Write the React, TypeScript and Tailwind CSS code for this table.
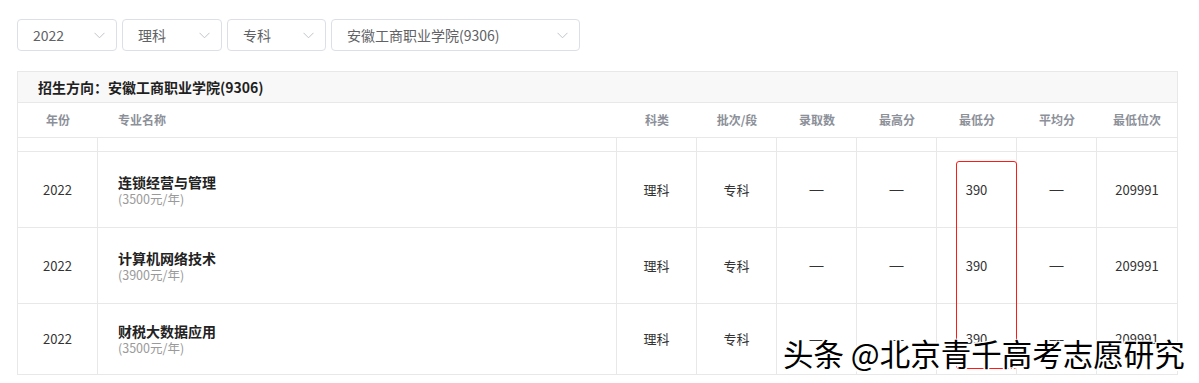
import React from "react";

const cols = "grid grid-cols-[80px_519px_80px_80px_80px_80px_80px_80px_80px]";

function Select({ w, label }: { w: string; label: string }) {
  return (
    <div className={`${w} h-[32px] border border-[#dcdfe6] rounded-[4px] flex items-center justify-between pl-[15px] pr-[11px] bg-white`}>
      <span className="text-[14px] text-[#606266]">{label}</span>
      <svg width="11" height="7" viewBox="0 0 11 7" fill="none">
        <path d="M0.5 0.8 L5.5 5.8 L10.5 0.8" stroke="#c0c4cc" strokeWidth="1" />
      </svg>
    </div>
  );
}

const rows = [
  { name: "连锁经营与管理", fee: "(3500元/年)", h: "h-[76px]" },
  { name: "计算机网络技术", fee: "(3900元/年)", h: "h-[76px]" },
  { name: "财税大数据应用", fee: "(3500元/年)", h: "h-[70px]" },
];

function Dash() {
  return <span className="font-['Liberation_Sans',sans-serif] text-[14px] text-[#333]">—</span>;
}

export default function App() {
  const cell = "border-r border-[#e8e8e8] flex items-center justify-center text-[13px] text-[#333]";
  return (
    <div className="relative w-[1199px] h-[383px] overflow-hidden bg-white font-['Noto_Sans_CJK_SC',sans-serif]">
      <div className="pt-[19px] pl-[17px]">
        <div className="flex gap-[5px]">
          <Select w="w-[100px]" label="2022" />
          <Select w="w-[100px]" label="理科" />
          <Select w="w-[99px]" label="专科" />
          <Select w="w-[249px]" label="安徽工商职业学院(9306)" />
        </div>
        <div className="mt-[20px] w-[1161px] border border-[#e8e8e8]">
          <div className="h-[31px] bg-[#f8f8f8] border-b border-[#e8e8e8] flex items-center pl-[20px] text-[14px] font-bold text-[#1f1f1f]">
            招生方向：安徽工商职业学院(9306)
          </div>
          <div className={`${cols} h-[35px] border-b border-[#e8e8e8] text-[12px] font-semibold text-[#8c9099]`}>
            <div className="flex items-center justify-center">年份</div>
            <div className="flex items-center pl-[20px]">专业名称</div>
            <div className="flex items-center justify-center">科类</div>
            <div className="flex items-center justify-center">批次/段</div>
            <div className="flex items-center justify-center">录取数</div>
            <div className="flex items-center justify-center">最高分</div>
            <div className="flex items-center justify-center">最低分</div>
            <div className="flex items-center justify-center">平均分</div>
            <div className="flex items-center justify-center">最低位次</div>
          </div>
          <div className={`${cols} h-[14px] border-b border-[#e8e8e8]`}>
            {Array.from({ length: 9 }).map((_, i) => (
              <div key={i} className={i < 8 ? "border-r border-[#e8e8e8]" : ""} />
            ))}
          </div>
          {rows.map((r, idx) => (
            <div key={idx} className={`${cols} ${r.h} ${idx < 2 ? "border-b border-[#e8e8e8]" : ""}`}>
              <div className={cell}>2022</div>
              <div className="border-r border-[#e8e8e8] flex flex-col justify-center pl-[20px]">
                <div className="text-[14px] font-bold text-[#222] leading-[18px]">{r.name}</div>
                <div className="text-[12.5px] text-[#9a9a9a] leading-[16px]">{r.fee}</div>
              </div>
              <div className={`${cell} text-[12px]`}>理科</div>
              <div className={`${cell} text-[12px]`}>专科</div>
              <div className={cell}><Dash /></div>
              <div className={cell}><Dash /></div>
              <div className={cell}>390</div>
              <div className={cell}><Dash /></div>
              <div className="flex items-center justify-center text-[13px] text-[#333]">209991</div>
            </div>
          ))}
        </div>
      </div>
      <div className="absolute left-[956px] top-[161px] w-[61px] h-[208px] border border-[#ff1a1a] rounded-[3px]" />
      <div className="absolute left-[783px] top-[335px] text-[30.5px] leading-[36px] text-black whitespace-nowrap [text-shadow:1.5px_1.5px_0_#fff,-1.5px_-1.5px_0_#fff,1.5px_-1.5px_0_#fff,-1.5px_1.5px_0_#fff,0_0_3px_#fff]">
        头条 @北京青千高考志愿研究
      </div>
    </div>
  );
}
